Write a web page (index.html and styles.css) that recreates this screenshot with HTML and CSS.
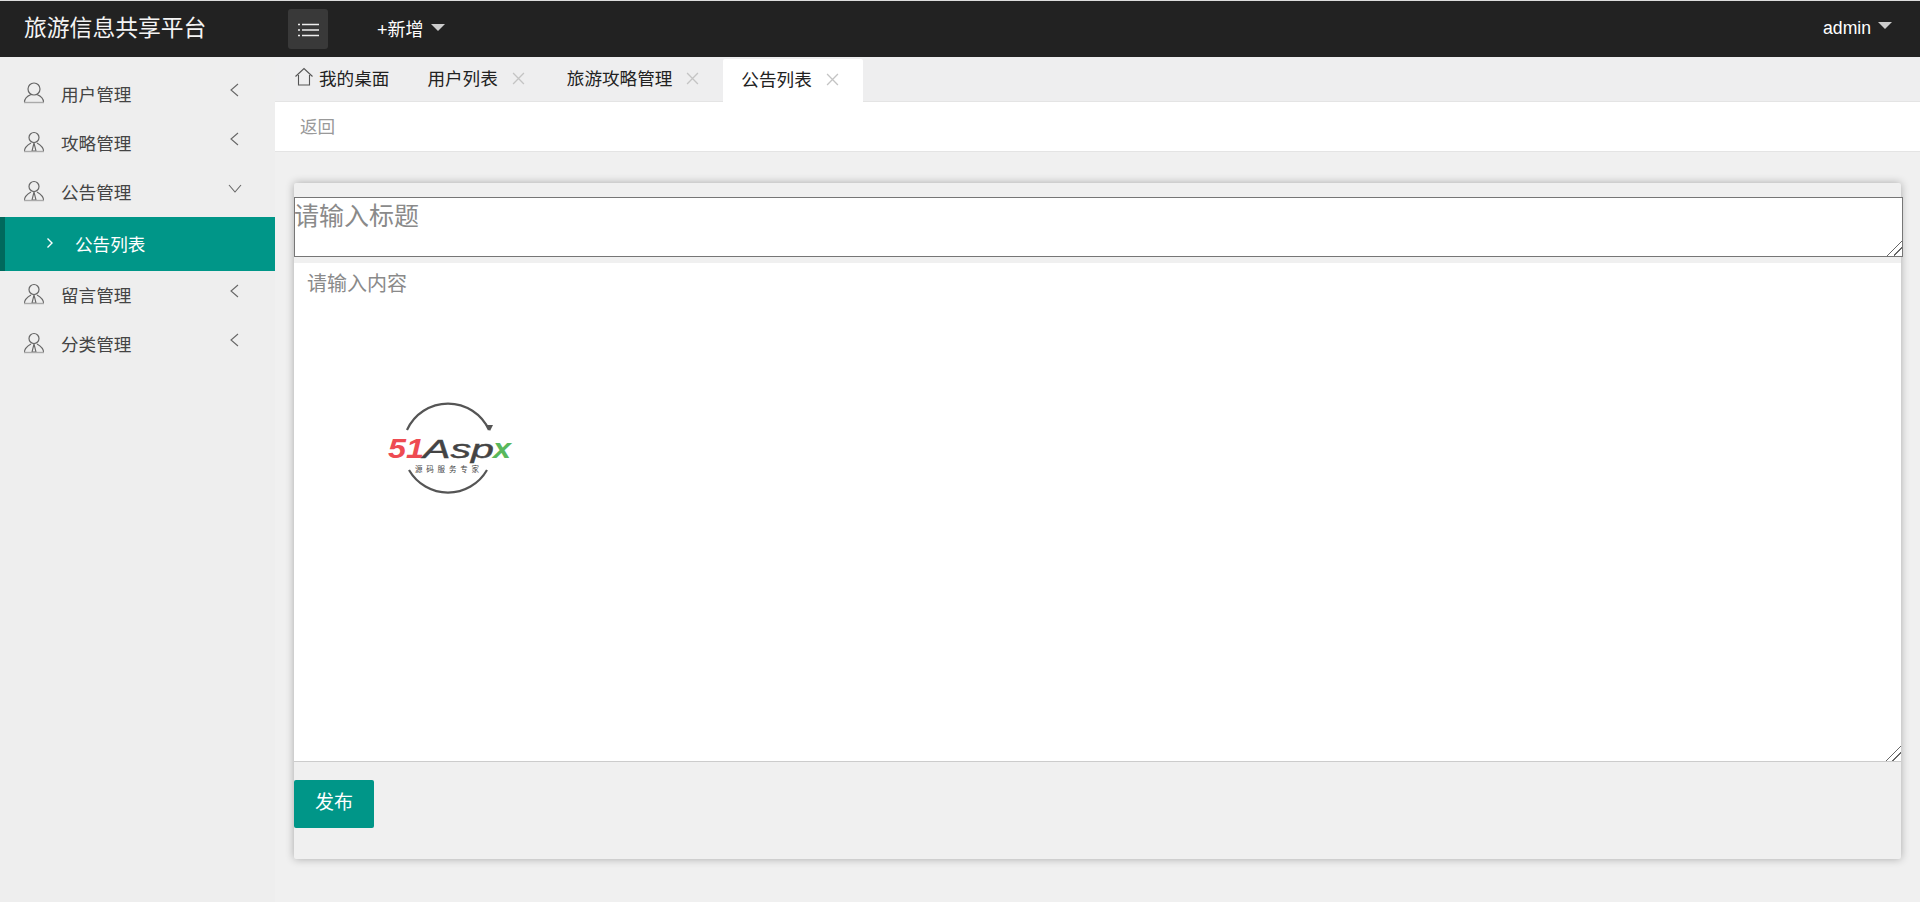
FILE: index.html
```html
<!DOCTYPE html>
<html lang="zh-CN">
<head>
<meta charset="utf-8">
<title>旅游信息共享平台</title>
<link rel="stylesheet" href="styles.css">
</head>
<body>
<header class="topbar">
  <div class="brand">旅游信息共享平台</div>
  <button class="menu-btn" type="button" aria-label="menu">
    <svg width="22" height="14" viewBox="0 0 22 14"><path d="M0 1.500h2M4 1.500h17M0 7h2M4 7h17M0 12.500h2M4 12.500h17" stroke="#eee" stroke-width="1.500" fill="none"/></svg>
  </button>
  <div class="new">+新增<span class="caret"></span></div>
  <div class="user">admin<span class="caret"></span></div>
</header>
<div class="body-row">
  <aside class="sidebar">
    <div class="nav-item">
      <svg class="nav-icon" viewBox="0 0 22 22"><circle cx="11" cy="7" r="6" fill="none" stroke="#666" stroke-width="1.200"/><path d="M1.500 20c0-4 3-6 6.500-7.500M20.500 20c0-4-3-6-6.500-7.500" fill="none" stroke="#666" stroke-width="1.200"/><path d="M1 20.500h20" stroke="#aaa" stroke-width="1.400"/></svg>
      <span class="nav-label">用户管理</span>
      <svg class="chev" viewBox="0 0 12 14"><path d="M9 1L2 7l7 6" fill="none" stroke="#666" stroke-width="1.100"/></svg>
    </div>
    <div class="nav-item">
      <svg class="nav-icon" viewBox="0 0 22 22"><circle cx="11" cy="6.500" r="5" fill="none" stroke="#666" stroke-width="1.200"/><path d="M1.500 20c0-4 3-6 6.500-8M20.500 20c0-4-3-6-6.500-8M11 12l-2 8h4z" fill="none" stroke="#666" stroke-width="1.100"/><path d="M1 20.500h20" stroke="#aaa" stroke-width="1.400"/></svg>
      <span class="nav-label">攻略管理</span>
      <svg class="chev" viewBox="0 0 12 14"><path d="M9 1L2 7l7 6" fill="none" stroke="#666" stroke-width="1.100"/></svg>
    </div>
    <div class="nav-item">
      <svg class="nav-icon" viewBox="0 0 22 22"><circle cx="11" cy="6.500" r="5" fill="none" stroke="#666" stroke-width="1.200"/><path d="M1.500 20c0-4 3-6 6.500-8M20.500 20c0-4-3-6-6.500-8M11 12l-2 8h4z" fill="none" stroke="#666" stroke-width="1.100"/><path d="M1 20.500h20" stroke="#aaa" stroke-width="1.400"/></svg>
      <span class="nav-label">公告管理</span>
      <svg class="chev chev-down" viewBox="0 0 14 12"><path d="M1 2l6 7 6-7" fill="none" stroke="#666" stroke-width="1.100"/></svg>
    </div>
    <div class="nav-sub">
      <svg class="sub-chev" viewBox="0 0 8 12"><path d="M1.500 1.500L6 6l-4.500 4.500" fill="none" stroke="#fff" stroke-width="1.400"/></svg>
      <span>公告列表</span>
    </div>
    <div class="nav-item">
      <svg class="nav-icon" viewBox="0 0 22 22"><circle cx="11" cy="6.500" r="5" fill="none" stroke="#666" stroke-width="1.200"/><path d="M1.500 20c0-4 3-6 6.500-8M20.500 20c0-4-3-6-6.500-8M11 12l-2 8h4z" fill="none" stroke="#666" stroke-width="1.100"/><path d="M1 20.500h20" stroke="#aaa" stroke-width="1.400"/></svg>
      <span class="nav-label">留言管理</span>
      <svg class="chev" viewBox="0 0 12 14"><path d="M9 1L2 7l7 6" fill="none" stroke="#666" stroke-width="1.100"/></svg>
    </div>
    <div class="nav-item">
      <svg class="nav-icon" viewBox="0 0 22 22"><circle cx="11" cy="6.500" r="5" fill="none" stroke="#666" stroke-width="1.200"/><path d="M1.500 20c0-4 3-6 6.500-8M20.500 20c0-4-3-6-6.500-8M11 12l-2 8h4z" fill="none" stroke="#666" stroke-width="1.100"/><path d="M1 20.500h20" stroke="#aaa" stroke-width="1.400"/></svg>
      <span class="nav-label">分类管理</span>
      <svg class="chev" viewBox="0 0 12 14"><path d="M9 1L2 7l7 6" fill="none" stroke="#666" stroke-width="1.100"/></svg>
    </div>
  </aside>
  <main class="main">
    <nav class="tabs">
      <div class="tab tab-home">
        <svg class="home" viewBox="0 0 20 20"><path d="M1.500 9.500L10 1.500l8.500 8M4.500 8v10h11V8" fill="none" stroke="#555" stroke-width="1.100"/></svg>
        <span>我的桌面</span>
      </div>
      <div class="tab"><span>用户列表</span><svg class="close" viewBox="0 0 12 12"><path d="M1 1l10 10M11 1L1 11" stroke="#c4c4c4" stroke-width="1.200"/></svg></div>
      <div class="tab"><span>旅游攻略管理</span><svg class="close" viewBox="0 0 12 12"><path d="M1 1l10 10M11 1L1 11" stroke="#c4c4c4" stroke-width="1.200"/></svg></div>
      <div class="tab tab-active"><span>公告列表</span><svg class="close" viewBox="0 0 12 12"><path d="M1 1l10 10M11 1L1 11" stroke="#c4c4c4" stroke-width="1.200"/></svg></div>
    </nav>
    <div class="crumb">返回</div>
    <section class="content">
      <div class="card">
        <textarea class="title-input" placeholder="请输入标题"></textarea>
        <div class="editor">
          <textarea class="body-input" placeholder="请输入内容"></textarea>
          <svg class="logo" viewBox="0 0 130 100" width="130" height="100">
            <path d="M23 32A45 45 0 0 1 105 32" fill="none" stroke="#555" stroke-width="2.200"/>
            <path d="M101.500 27l4.500 6 3-6z" fill="#555"/>
            <path d="M103 72A45 45 0 0 1 25 72" fill="none" stroke="#555" stroke-width="2.200"/>
            <text x="4" y="60" textLength="36" lengthAdjust="spacingAndGlyphs" class="logo-51">51</text>
            <text x="39" y="60" textLength="71" lengthAdjust="spacingAndGlyphs" class="logo-asp">Asp</text>
            <text x="109" y="60" textLength="18" lengthAdjust="spacingAndGlyphs" class="logo-x">x</text>
            <text x="31" y="74" textLength="64" class="logo-sub">源码服务专家</text>
          </svg>
        </div>
        <button class="publish" type="button">发布</button>
      </div>
    </section>
  </main>
</div>
</body>
</html>
```

FILE: styles.css
```css
* { box-sizing: border-box; }
html, body { margin: 0; height: 100%; }
body {
  font-family: "Liberation Sans", "Noto Sans CJK SC", sans-serif;
  background: #eee;
  overflow: hidden;
  display: flex;
  flex-direction: column;
}
.topbar {
  height: 57px;
  flex: none;
  background: #222;
  border-top: 1px solid #ddd;
  display: flex;
  align-items: center;
  color: #fff;
}
.brand {
  width: 288px;
  padding: 0 0 6px 24px;
  font-size: 22.8px;
  color: #f4f4f4;
}
.menu-btn {
  width: 40px;
  height: 40px;
  border: 0;
  border-radius: 3px;
  background: #393939;
  padding: 2px 0 0 1px;
  display: flex;
  align-items: center;
  justify-content: center;
  margin-top: -1px;
}
.new {
  margin-left: 49px;
  font-size: 18px;
  color: #fff;
  padding-bottom: 3px;
}
.user {
  margin-left: auto;
  margin-right: 28px;
  font-size: 17.6px;
  padding-bottom: 2px;
}
.caret {
  display: inline-block;
  margin-left: 7px;
  vertical-align: 5px;
  border-left: 7px solid transparent;
  border-right: 7px solid transparent;
  border-top: 7px solid #ccc;
}
.body-row { flex: 1; display: flex; min-height: 0; }
.sidebar {
  width: 275px;
  flex: none;
  background: #eee;
  padding-top: 13px;
}
.nav-item {
  height: 49px;
  display: flex;
  align-items: center;
  position: relative;
  color: #444;
  font-size: 17.6px;
  padding: 0 0 3px 23px;
}
.nav-icon { width: 22px; height: 22px; flex: none; }
.nav-label { margin-left: 16px; }
.chev { width: 12px; height: 14px; position: absolute; left: 229px; top: 13px; }
.chev-down { width: 16px; height: 12px; left: 227px; top: 15px; }
.nav-sub {
  height: 54px;
  background: #009688;
  border-left: 5px solid #00695c;
  color: #fff;
  font-size: 17.6px;
  display: flex;
  align-items: center;
  padding: 0 0 2px 41px;
}
.sub-chev { width: 8px; height: 12px; margin-right: 21px; }
.main { flex: 1; min-width: 0; display: flex; flex-direction: column; }
.tabs {
  height: 45px;
  flex: none;
  display: flex;
  background: #eeeeef;
  align-items: stretch;
  padding-top: 2px;
  border-bottom: 1px solid #e4e4e4;
}
.tab {
  display: flex;
  align-items: center;
  font-size: 17.6px;
  color: #222;
  padding: 0 24px 6px 18px;
}
.tab-home { padding: 0 20px 6px 19px; }
.home { width: 20px; height: 20px; margin-right: 5px; }
.close { width: 13px; height: 13px; margin-left: 14px; margin-top: 2px; }
.tab-active { background: #fff; border-radius: 2px 2px 0 0; height: 44px; }
.crumb {
  height: 50px;
  flex: none;
  background: #fff;
  border-bottom: 1px solid #e4e4e4;
  padding: 0 0 3px 25px;
  display: flex;
  align-items: center;
  font-size: 17.6px;
  color: #999;
}
.content { flex: 1; padding: 31px 18px 0 19px; background: #f0f0f0; }
.card {
  background: #f0f0f0;
  height: 676px;
  padding-top: 14px;
  box-shadow: 0 0 8px rgba(0, 0, 0, 0.3);
  border-radius: 2px;
  margin-right: 1px;
}
.title-input {
  display: block;
  width: 1609px;
  height: 60px;
  padding: 0;
  text-indent: -1px;
  border: 1px solid #767676;
  font: 25px/36px "Liberation Sans", "Noto Sans CJK SC", sans-serif;
  background: #fff;
  outline: none;
  border-radius: 0;
}
.title-input::placeholder, .body-input::placeholder { color: #8a8a8a; opacity: 1; }
.title-input::-webkit-resizer, .body-input::-webkit-resizer {
  background: linear-gradient(135deg, transparent 0 48%, #666 48% 53%, transparent 53% 70%, #666 70% 75%, transparent 75%);
}
.editor { position: relative; margin-top: 6px; width: 100%; }
.body-input {
  display: block;
  width: 100%;
  height: 499px;
  border: 0;
  border-bottom: 1px solid #ccc;
  padding: 5px 13px;
  font: 20px "Liberation Sans", "Noto Sans CJK SC", sans-serif;
  background: #fff;
  outline: none;
}
.logo { position: absolute; left: 90px; top: 135px; pointer-events: none; }
.logo-51 { font: italic bold 28px "Liberation Sans", sans-serif; fill: #ee4b52; }
.logo-asp { font: italic 26px "Liberation Sans", sans-serif; fill: #444; stroke: #444; stroke-width: 0.4px; }
.logo-x { font: italic bold 28px "Liberation Sans", sans-serif; fill: #59b85c; }
.logo-sub { font: 7.5px "Noto Sans CJK SC", sans-serif; fill: #444; }
.publish {
  display: block;
  margin-top: 18px;
  width: 80px;
  height: 48px;
  background: #009688;
  color: #fff;
  border: 0;
  border-radius: 2px;
  font: 19px "Liberation Sans", "Noto Sans CJK SC", sans-serif;
  padding: 0 0 7px;
}
```
